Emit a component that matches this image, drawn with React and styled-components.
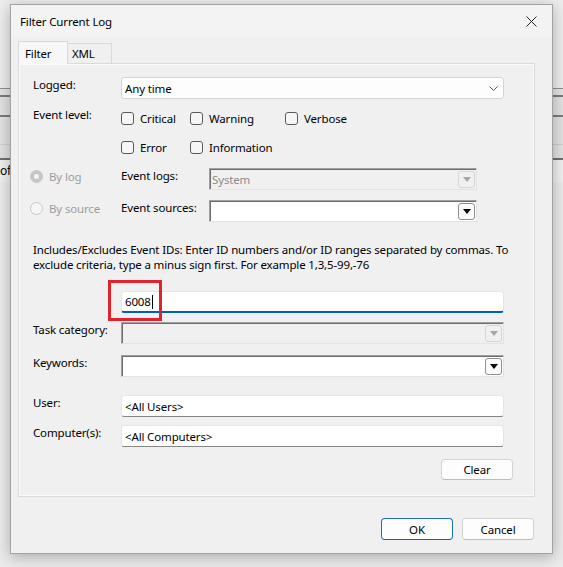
import React from 'react';
import styled, { createGlobalStyle } from 'styled-components';

const GlobalStyle = createGlobalStyle`
  html, body {
    margin: 0;
    padding: 0;
  }
  body {
    font-family: "Noto Sans", "Segoe UI", sans-serif;
    font-size: 11.5px;
    letter-spacing: -0.15px;
    color: #000;
  }
  * {
    box-sizing: border-box;
  }
`;

const Page = styled.div`
  position: relative;
  width: 563px;
  height: 567px;
  overflow: hidden;
  background: #ebebeb;
`;

// the window that sits behind the dialog, only its edges show
const Backdrop = styled.div`
  display: flex;
  flex-direction: column;
`;

const BackBand = styled.div`
  height: ${p => p.h}px;
  background: ${p => p.bg};
  border-bottom: ${p => (p.line ? `${p.lineW || 1}px solid ${p.line}` : 'none')};
  line-height: ${p => p.h}px;
  font-size: 12px;
  white-space: nowrap;
`;

const Dialog = styled.div`
  position: absolute;
  left: 10px;
  top: 4px;
  width: 543px;
  display: flex;
  flex-direction: column;
  background: #f0f0f0;
  border: 1px solid #a3a3a3;
  box-shadow: 0 3px 14px rgba(0, 0, 0, 0.28);
`;

const TitleBar = styled.div`
  height: 32px;
  display: flex;
  align-items: center;
  justify-content: space-between;
  padding: 0 15px 0 9px;
  background: #f3f3f3;
`;

const Title = styled.span`
  font-size: 11.5px;
`;

const Body = styled.div`
  display: flex;
  flex-direction: column;
  padding: 4px 17px 13px 7px;
`;

const TabStrip = styled.div`
  display: flex;
  align-items: flex-end;
  height: 22px;
`;

const Tab = styled.div`
  position: relative;
  z-index: ${p => (p.active ? 1 : 0)};
  width: ${p => p.w}px;
  height: ${p => (p.active ? 23 : 20)}px;
  margin-bottom: ${p => (p.active ? -1 : 0)}px;
  display: flex;
  align-items: center;
  padding-left: ${p => (p.active ? 6 : 4)}px;
  border: 1px solid #d9d9d9;
  border-bottom: none;
  border-left: ${p => (p.active ? '1px solid #d9d9d9' : 'none')};
  background: ${p => (p.active ? '#f7f7f7' : '#f0f0f0')};
`;

const Panel = styled.div`
  display: flex;
  flex-direction: column;
  padding: 13px 30px 16px 14px;
  border: 1px solid #dadada;
  box-shadow: inset 1px 1px 0 #fbfbfb, inset -1px -1px 0 #fbfbfb;
`;

const Row = styled.div`
  display: grid;
  grid-template-columns: 88px 1fr;
  align-items: start;
  margin-top: ${p => p.mt || 0}px;
`;

const SourceRow = styled.div`
  display: grid;
  grid-template-columns: 88px 88px 268px;
  align-items: start;
  margin-top: ${p => p.mt || 0}px;
`;

const Label = styled.span`
  line-height: 16px;
  white-space: nowrap;
`;

const Checks = styled.div`
  display: grid;
  grid-template-columns: 69px 95px auto;
  row-gap: 13px;
  margin-top: 3px;
`;

const CheckItem = styled.label`
  display: flex;
  align-items: center;
  gap: 6px;
  height: 16px;
  white-space: nowrap;
`;

const CheckBox = styled.span`
  width: 13px;
  height: 13px;
  border: 1px solid #5a5a5a;
  border-radius: 3px;
  background: #f6f6f6;
  flex: none;
`;

const RadioItem = styled.label`
  display: flex;
  align-items: center;
  gap: 6px;
  height: 16px;
  margin-left: -3px;
  color: #9d9d9d;
  white-space: nowrap;
`;

const Radio = styled.span`
  width: 13px;
  height: 13px;
  border-radius: 50%;
  flex: none;
  border: 1px solid #c6c6c6;
  background: ${p => (p.checked ? '#c6c6c6' : '#f6f6f6')};
  display: flex;
  align-items: center;
  justify-content: center;

  &::after {
    content: '';
    display: ${p => (p.checked ? 'block' : 'none')};
    width: 5px;
    height: 5px;
    border-radius: 50%;
    background: #f4f4f4;
  }
`;

const ComboBox = styled.div`
  height: 22px;
  display: flex;
  align-items: center;
  justify-content: space-between;
  padding: 0 5px 0 3px;
  background: #fdfdfd;
  border: 1px solid #d4d4d4;
  border-radius: 3px;
`;

const TextBox = styled.div`
  height: 22px;
  display: flex;
  align-items: center;
  padding-left: 3px;
  background: #fff;
  border: 1px solid #e6e6e6;
  border-bottom: ${p => (p.focused ? '2px solid #005fb8' : '1px solid #868686')};
  border-radius: 3px;
`;

const ClassicCombo = styled.div`
  height: ${p => p.h || 22}px;
  display: flex;
  align-items: center;
  justify-content: space-between;
  padding: 0 1px 0 2px;
  background: ${p => (p.disabled ? '#f0f0f0' : '#fff')};
  color: ${p => (p.disabled ? '#8b8b8b' : '#000')};
  border: 1px solid;
  border-color: #a0a0a0 #e3e3e3 #e3e3e3 #a0a0a0;
  box-shadow: inset 1px 1px 0 #6e6e6e;
`;

const DropButton = styled.span`
  width: 17px;
  height: 17px;
  display: flex;
  align-items: center;
  justify-content: center;
  border: 1px solid ${p => (p.disabled ? '#d6d6d6' : '#8f8f8f')};
  border-radius: 3px;
  background: ${p => (p.disabled ? '#f0f0f0' : '#fbfbfb')};
`;

const Description = styled.div`
  margin-top: 20px;
  line-height: 15px;
  white-space: nowrap;
`;

const IdField = styled.div`
  position: relative;
`;

const Caret = styled.span`
  display: inline-block;
  width: 1px;
  height: 14px;
  margin-left: 1px;
  background: #000;
`;

// red annotation rectangle drawn over the input
const Marker = styled.div`
  position: absolute;
  left: -13px;
  top: -11px;
  width: 54px;
  height: 41px;
  border: 3px solid #e3222c;
`;

const ClearRow = styled.div`
  display: flex;
  justify-content: flex-end;
  margin: 12px -9px 0 0;
`;

const Button = styled.button`
  width: 72px;
  height: ${p => p.h || 22}px;
  padding: 0;
  font-family: inherit;
  font-size: 11.5px;
  letter-spacing: -0.15px;
  color: #000;
  background: #fdfdfd;
  border: 1px solid ${p => (p.primary ? '#1a6fc4' : '#d3d3d3')};
  border-bottom-color: ${p => (p.primary ? '#0f5fae' : '#bcbcbc')};
  border-radius: 4px;
`;

const Footer = styled.div`
  display: flex;
  justify-content: flex-end;
  gap: 9px;
  margin-top: 21px;
  padding-right: 1px;
`;

const backBands = [
  { h: 89, bg: '#ededed', line: '#8f8f8f' },
  { h: 8, bg: '#e4e4e4', line: '#7b7b7b', lineW: 2 },
  { h: 20, bg: '#e2e2e2', line: '#7b7b7b', lineW: 2 },
  { h: 28, bg: '#e2e2e2', line: '#cfcfcf' },
  { h: 15, bg: '#e2e2e2', line: '#707070', lineW: 2 },
  { h: 22, bg: '#f0f0f0', text: 'of' },
];

const Chevron = () => (
  <svg width="9" height="5" viewBox="0 0 9 5">
    <polyline points="0.5,0.5 4.5,4.5 8.5,0.5" fill="none" stroke="#555" strokeWidth="1" />
  </svg>
);

const Triangle = ({ color }) => (
  <svg width="8" height="5" viewBox="0 0 8 5">
    <polygon points="0,0 8,0 4,5" fill={color} />
  </svg>
);

const CloseIcon = () => (
  <svg width="11" height="11" viewBox="0 0 11 11">
    <path d="M0.5 0.5 L10.5 10.5 M10.5 0.5 L0.5 10.5" stroke="#222" strokeWidth="1" />
  </svg>
);

const Check = ({ children }) => (
  <CheckItem>
    <CheckBox />
    {children}
  </CheckItem>
);

export default function App() {
  return (
    <Page>
      <GlobalStyle />
      <Backdrop>
        {backBands.map((b, i) => (
          <BackBand key={i} {...b}>{b.text}</BackBand>
        ))}
      </Backdrop>

      <Dialog>
        <TitleBar>
          <Title>Filter Current Log</Title>
          <CloseIcon />
        </TitleBar>

        <Body>
          <TabStrip>
            <Tab active w={50}>Filter</Tab>
            <Tab w={44}>XML</Tab>
          </TabStrip>

          <Panel>
            <Row>
              <Label>Logged:</Label>
              <ComboBox>
                <span>Any time</span>
                <Chevron />
              </ComboBox>
            </Row>

            <Row mt={8}>
              <Label>Event level:</Label>
              <Checks>
                <Check>Critical</Check>
                <Check>Warning</Check>
                <Check>Verbose</Check>
                <Check>Error</Check>
                <Check>Information</Check>
              </Checks>
            </Row>

            <SourceRow mt={13}>
              <RadioItem>
                <Radio checked />
                By log
              </RadioItem>
              <Label>Event logs:</Label>
              <ClassicCombo disabled>
                <span>System</span>
                <DropButton disabled>
                  <Triangle color="#a6a6a6" />
                </DropButton>
              </ClassicCombo>
            </SourceRow>

            <SourceRow mt={10}>
              <RadioItem>
                <Radio />
                By source
              </RadioItem>
              <Label>Event sources:</Label>
              <ClassicCombo>
                <span />
                <DropButton>
                  <Triangle color="#000" />
                </DropButton>
              </ClassicCombo>
            </SourceRow>

            <Description>
              Includes/Excludes Event IDs: Enter ID numbers and/or ID ranges separated by commas. To
              <br />
              exclude criteria, type a minus sign first. For example 1,3,5-99,-76
            </Description>

            <Row mt={19}>
              <span />
              <IdField>
                <TextBox focused>
                  6008<Caret />
                </TextBox>
                <Marker />
              </IdField>
            </Row>

            <Row mt={9}>
              <Label>Task category:</Label>
              <ClassicCombo disabled>
                <span />
                <DropButton disabled>
                  <Triangle color="#a6a6a6" />
                </DropButton>
              </ClassicCombo>
            </Row>

            <Row mt={11}>
              <Label>Keywords:</Label>
              <ClassicCombo>
                <span />
                <DropButton>
                  <Triangle color="#000" />
                </DropButton>
              </ClassicCombo>
            </Row>

            <Row mt={18}>
              <Label>User:</Label>
              <TextBox>&lt;All Users&gt;</TextBox>
            </Row>

            <Row mt={8}>
              <Label>Computer(s):</Label>
              <TextBox>&lt;All Computers&gt;</TextBox>
            </Row>

            <ClearRow>
              <Button h={21}>Clear</Button>
            </ClearRow>
          </Panel>

          <Footer>
            <Button primary>OK</Button>
            <Button>Cancel</Button>
          </Footer>
        </Body>
      </Dialog>
    </Page>
  );
}
